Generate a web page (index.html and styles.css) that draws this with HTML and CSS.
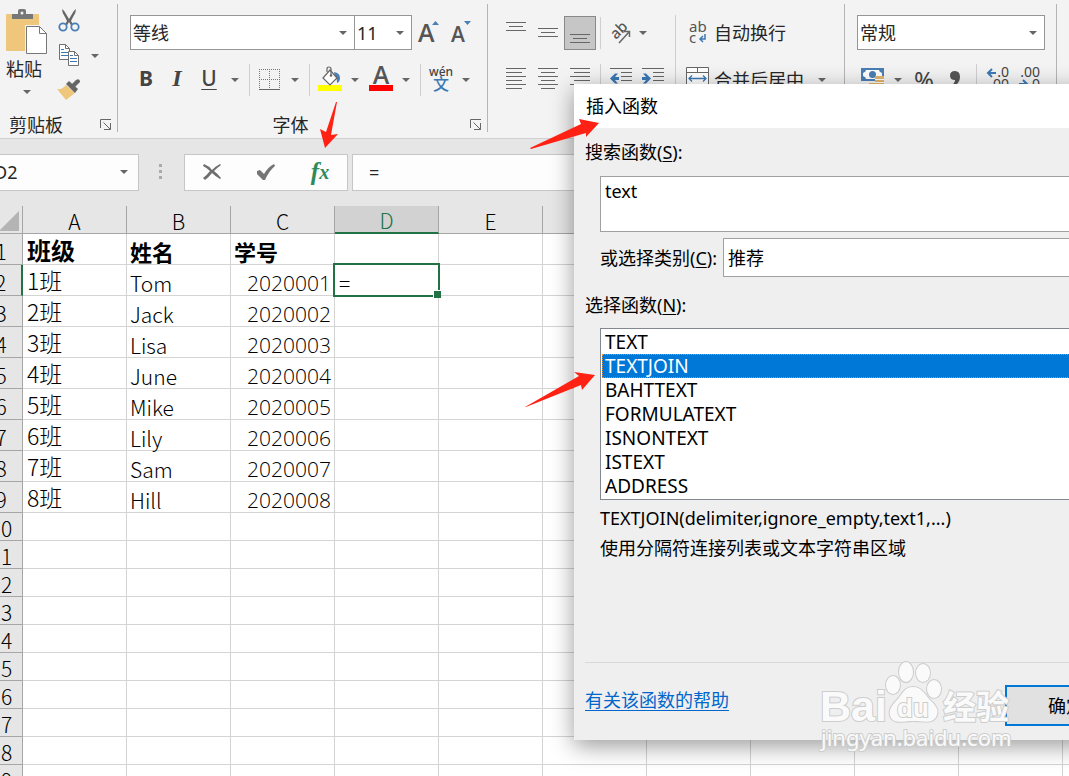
FILE: index.html
```html
<!DOCTYPE html>
<html lang="zh-CN">
<head>
<meta charset="utf-8">
<title>插入函数</title>
<link rel="stylesheet" href="styles.css">
</head>
<body>
<header class="ribbon">
  <section class="group clipboard">
    <div class="clip-body">
      <button class="tool paste" type="button">
        <svg width="42" height="46" viewBox="0 0 42 46"><path fill="#eec77c" d="M0 6q0-1 1-1h31q1 0 1 1v36H1q-1 0-1-1z"/><path fill="#777" d="M6 10V5h6V2q0-2 2-2h4q2 0 2 2v3h7v5z"/><circle cx="16" cy="4" r="1.500" fill="#f3f3f3"/><path fill="#fff" stroke="#f3f3f3" stroke-width="4" d="M21 18h13l7 7v20H21z"/><path fill="#fff" stroke="#777" d="M20.500 17.500h13l7 7v20h-20z"/><path fill="none" stroke="#777" d="M33.500 17.500v7h7"/></svg>
        <span>粘贴</span><i class="caret"></i>
      </button>
      <div class="clip-tools">
        <button class="tool" type="button" aria-label="剪切"><svg width="22" height="24" viewBox="0 0 22 24"><path fill="#666" d="M4 0q2 1 4 5l3 5 3-5q2-4 4-5 0 4-3 8l-2 4 3 5-2 1-3-5-3 5-2-1 3-5-2-4Q4 4 4 0z"/><g fill="#f3f3f3" stroke="#4a7fb5" stroke-width="1.800"><circle cx="5" cy="18" r="3.700"/><circle cx="17" cy="18" r="3.700"/></g></svg></button><i></i>
        <button class="tool" type="button" aria-label="复制"><svg width="22" height="24" viewBox="0 0 22 24"><g fill="#fff" stroke="#707070"><path d="M1.500.5h6l4 4v11h-10z"/><path d="M7.500.5v4h4" fill="none"/></g><path stroke="#3c78b4" d="M3 5.500h3M3 8.500h7M3 11.500h7"/><g fill="#fff" stroke="#707070"><path d="M10.500 7.500h6l4 4v10h-10z"/><path d="M16.500 7.500v4h4" fill="none"/></g><path stroke="#3c78b4" d="M12 11.500h3M12 14.500h7M12 17.500h7"/></svg></button><button class="tool" type="button" aria-label="复制选项"><i class="caret"></i></button>
        <button class="tool" type="button" aria-label="格式刷"><svg width="24" height="22" viewBox="0 0 24 22"><path fill="#eec77c" d="M0 10q5 1 9-4l9 8-9 7z"/><path fill="#666" d="m9 5 3-3 9 8-3 4zM15 5l4-4q3-2 4 1 0 2-1 2l-4 4z"/></svg></button>
      </div>
    </div>
    <footer><span>剪贴板</span><button class="tool launcher" type="button" aria-label="剪贴板设置"><svg width="12" height="12" viewBox="0 0 12 12"><path fill="none" stroke="#666" d="M.5 9V.5H11M3.500 3.500l7 7M10.500 4v6.500H4"/></svg></button></footer>
  </section>

  <section class="group font">
    <div class="row">
      <label class="drop name"><select aria-label="字体"><option>等线</option></select></label><label class="drop size"><select aria-label="字号"><option>11</option></select></label>
      <button class="tool grow" type="button" aria-label="增大字号"><svg width="22" height="24" viewBox="0 0 22 24"><path fill="#4a7fb5" d="M15 4l3.500-4L22 4z"/><text x="1" y="21" class="letter big">A</text></svg></button>
      <button class="tool grow" type="button" aria-label="减小字号"><svg width="22" height="24" viewBox="0 0 22 24"><path fill="#4a7fb5" d="M15 0h7l-3.500 4z"/><text x="2" y="21" class="letter small">A</text></svg></button>
    </div>
    <div class="row font-tools">
      <button class="tool" type="button"><b>B</b></button>
      <button class="tool" type="button"><em>I</em></button>
      <button class="tool" type="button"><u>U</u></button>
      <button class="tool" type="button" aria-label="下划线选项"><i class="caret"></i></button>
      <i class="sep"></i>
      <button class="tool" type="button" aria-label="边框"><svg width="22" height="22" viewBox="0 0 22 22"><path fill="none" stroke="#777" stroke-dasharray="1 1" d="M.5 0v21M20.500 0v21M10.500 0v21M0 .5h21M0 10.500h21"/><path stroke="#666" stroke-width="1" d="M0 20.500h21"/></svg></button>
      <button class="tool" type="button" aria-label="边框选项"><i class="caret"></i></button>
      <i class="sep"></i>
      <button class="tool" type="button" aria-label="填充颜色"><svg width="24" height="28" viewBox="0 0 24 28"><path fill="#ff0" d="M0 19h24v6H0z"/><path fill="#4a7fb5" d="M16 6q6 1 6 6 0 4-3 5 0-5-2-7z"/><path fill="#fff" stroke="#666" stroke-width="1.200" d="m12 4 7 8-7 7-7-7z"/><path fill="none" stroke="#666" stroke-width="1.200" d="M9 6V3q0-2 2-2t2 2v7"/><circle cx="13" cy="9.500" r="1.300" fill="#666"/></svg></button>
      <button class="tool" type="button" aria-label="填充选项"><i class="caret"></i></button>
      <button class="tool" type="button" aria-label="字体颜色"><svg width="24" height="28" viewBox="0 0 24 28"><path fill="red" d="M0 19h24v6H0z"/><text x="12" y="18" text-anchor="middle" class="letter big">A</text></svg></button>
      <button class="tool" type="button" aria-label="颜色选项"><i class="caret"></i></button>
      <i class="sep"></i>
      <button class="tool" type="button" aria-label="拼音"><svg width="24" height="28" viewBox="0 0 24 28"><text x="12" y="10" text-anchor="middle" class="pinyin">wén</text><text x="12" y="24" text-anchor="middle" class="wen">文</text></svg></button>
      <button class="tool" type="button" aria-label="拼音选项"><i class="caret"></i></button>
    </div>
    <footer><span>字体</span><button class="tool launcher" type="button" aria-label="字体设置"><svg width="12" height="12" viewBox="0 0 12 12"><path fill="none" stroke="#666" d="M.5 9V.5H11M3.500 3.500l7 7M10.500 4v6.500H4"/></svg></button></footer>
  </section>

  <section class="group align">
    <div class="align-left">
      <div class="row align-tools">
        <button class="tool" type="button" aria-label="顶端对齐"><svg width="20" height="22" viewBox="0 0 20 22"><path stroke="#666" d="M0 .5h20M3 4.500h14M0 8.500h20"/></svg></button>
        <button class="tool" type="button" aria-label="垂直居中"><svg width="20" height="22" viewBox="0 0 20 22"><path stroke="#666" d="M0 6.500h20M3 10.500h14M0 14.500h20"/></svg></button>
        <button class="tool pressed" type="button" aria-label="底端对齐"><svg width="20" height="22" viewBox="0 0 20 22"><path stroke="#666" d="M0 12.500h20M3 16.500h14M0 20.500h20"/></svg></button>
        <i class="sep"></i>
        <button class="tool" type="button" aria-label="方向"><svg width="24" height="24" viewBox="0 0 24 24"><text x="0" y="0" class="ab" transform="translate(7 19) rotate(-45)">ab</text><path fill="none" stroke="#666" stroke-width="1.500" d="M10 22 20 11M15 10.500h5.500V16"/></svg></button>
        <button class="tool start" type="button" aria-label="方向选项"><i class="caret"></i></button>
      </div>
      <div class="row align-tools">
        <button class="tool" type="button" aria-label="左对齐"><svg width="20" height="24" viewBox="0 0 20 24"><path stroke="#666" d="M0 .5h20M0 4.500h16M0 8.500h20M0 12.500h16M0 16.500h20M0 20.500h16"/></svg></button>
        <button class="tool" type="button" aria-label="居中"><svg width="20" height="24" viewBox="0 0 20 24"><path stroke="#666" d="M0 .5h20M3 4.500h14M0 8.500h20M3 12.500h14M0 16.500h20M3 20.500h14"/></svg></button>
        <button class="tool" type="button" aria-label="右对齐"><svg width="20" height="24" viewBox="0 0 20 24"><path stroke="#666" d="M0 .5h20M4 4.500h16M0 8.500h20M4 12.500h16M0 16.500h20M4 20.500h16"/></svg></button>
        <i class="sep"></i>
        <button class="tool" type="button" aria-label="减少缩进"><svg width="22" height="24" viewBox="0 0 22 24"><path stroke="#666" d="M0 .5h22M11 4.500h11M11 8.500h11M11 12.500h11M0 16.500h22"/><path fill="#3c78b4" d="m0 10.500 5-5h3L5 9h4v3H5l3 3.500H5z"/></svg></button>
        <button class="tool" type="button" aria-label="增加缩进"><svg width="22" height="24" viewBox="0 0 22 24"><path stroke="#666" d="M0 .5h22M11 4.500h11M11 8.500h11M11 12.500h11M0 16.500h22"/><path fill="#3c78b4" d="m9 10.500-5-5H1L4 9H0v3h4l-3 3.500h3z"/></svg></button>
      </div>
    </div>
    <i class="sep tall"></i>
    <div class="align-right">
      <button class="tool row wide" type="button"><svg width="24" height="26" viewBox="0 0 24 26"><text x="3" y="12" class="abc">ab</text><text x="3" y="23" class="abc">c</text><path fill="none" stroke="#3c78b4" stroke-width="1.500" d="M19 14v5h-5M17 16l-3 3 3 3"/></svg><span>自动换行</span></button>
      <button class="tool row wide" type="button"><svg width="24" height="26" viewBox="0 0 24 26"><path fill="#fff" stroke="#666" d="M.5.5h22v21H.5zM.5 5.500h22M.5 17.500h22M11.500.5v5M11.500 17.500v4"/><path fill="none" stroke="#3c78b4" stroke-width="1.300" d="M3 11.500h17M6 8.500l-3 3 3 3M17 8.500l3 3-3 3"/></svg><span>合并后居中</span><i class="caret"></i></button>
    </div>
  </section>

  <section class="group number">
    <div class="row"><label class="drop format"><select aria-label="数字格式"><option>常规</option></select></label></div>
    <div class="row number-tools">
      <button class="tool" type="button" aria-label="会计数字格式"><svg width="24" height="24" viewBox="0 0 24 24"><path fill="#4a7fb5" d="M0 0h23v13H0z"/><path fill="#fff" d="M5 2h13q0 2 3 3v3q-3 1-3 3H5q0-2-3-3V5q3-1 3-3z"/><circle cx="11.500" cy="6.500" r="3.500" fill="#4a7fb5"/><path fill="#e4b56c" d="M14 8h9v14H8v-7h6z"/><path stroke="#fff" d="M14 11.500h9M14 14.500h9M8 17.500h15"/></svg></button>
      <button class="tool" type="button" aria-label="会计格式选项"><i class="caret"></i></button>
      <button class="tool percent" type="button">%</button>
      <button class="tool" type="button" aria-label="千位分隔"><svg width="12" height="22" viewBox="0 0 12 22"><path fill="#555" d="M5 2q5 0 5 6 0 7-8 10l-1-1q4-3 4-6-5 0-5-4.500T5 2z"/></svg></button>
      <i class="sep"></i>
      <button class="tool" type="button" aria-label="增加小数位"><svg width="26" height="28" viewBox="0 0 26 28"><text x="24" y="11" text-anchor="end" class="dec">.0</text><text x="24" y="23" text-anchor="end" class="dec">.00</text><path fill="none" stroke="#3c78b4" stroke-width="2" d="M3 7h8M7 3 3 7l4 4"/></svg></button>
      <button class="tool" type="button" aria-label="减少小数位"><svg width="26" height="28" viewBox="0 0 26 28"><text x="23" y="11" text-anchor="end" class="dec">.00</text><text x="23" y="23" text-anchor="end" class="dec">.0</text><path fill="none" stroke="#3c78b4" stroke-width="2" d="M2 18h8M6 14l4 4-4 4"/></svg></button>
    </div>
  </section>
</header>

<div class="formula-bar">
  <label class="drop name-box"><select aria-label="名称框"><option>D2</option></select></label>
  <svg class="grip" width="4" height="16" viewBox="0 0 4 16"><path fill="#aaa" d="M0 0h3v3H0zM0 6h3v3H0zM0 12h3v3H0z"/></svg>
  <div class="formula-actions">
    <button class="tool" type="button" aria-label="取消"><svg width="20" height="18" viewBox="0 0 20 18"><path fill="#6e6e6e" d="M2 1q5 2 8 6 4-4 8-6l1 1q-4 3-7 6 4 3 7 7l-1 1q-5-3-8-6-3 4-7 7l-2-2q4-3 7-7Q5 5 1 3z"/></svg></button>
    <button class="tool" type="button" aria-label="输入"><svg width="20" height="18" viewBox="0 0 20 18"><path fill="#757575" d="m1 8 3-1 4 4q4-7 10-10l1 2Q13 8 9 17H7L1 11z"/></svg></button>
    <button class="tool fx" type="button">f<small>x</small></button>
  </div>
  <input class="formula" aria-label="编辑栏" value="=">
</div>

<main class="sheet">
<table>
  <colgroup><col class="rows"><col span="11"></colgroup>
  <thead><tr><th><svg class="corner" width="20" height="20" viewBox="0 0 20 20"><path fill="#b4b4b4" d="M20 0v20H0z"/></svg></th><th>A</th><th>B</th><th>C</th><th class="active">D</th><th>E</th><th></th><th></th><th></th><th></th><th></th><th></th></tr></thead>
  <tbody>
  <tr class="data head"><th>1</th><td class="first">班级</td><td>姓名</td><td>学号</td><td></td><td></td><td></td><td></td><td></td><td></td><td></td><td></td></tr>
  <tr class="data"><th class="active">2</th><td class="first">1班</td><td>Tom</td><td class="num">2020001</td><td class="selected">=</td><td></td><td></td><td></td><td></td><td></td><td></td><td></td></tr>
  <tr class="data"><th>3</th><td class="first">2班</td><td>Jack</td><td class="num">2020002</td><td></td><td></td><td></td><td></td><td></td><td></td><td></td><td></td></tr>
  <tr class="data"><th>4</th><td class="first">3班</td><td>Lisa</td><td class="num">2020003</td><td></td><td></td><td></td><td></td><td></td><td></td><td></td><td></td></tr>
  <tr class="data"><th>5</th><td class="first">4班</td><td>June</td><td class="num">2020004</td><td></td><td></td><td></td><td></td><td></td><td></td><td></td><td></td></tr>
  <tr class="data"><th>6</th><td class="first">5班</td><td>Mike</td><td class="num">2020005</td><td></td><td></td><td></td><td></td><td></td><td></td><td></td><td></td></tr>
  <tr class="data"><th>7</th><td class="first">6班</td><td>Lily</td><td class="num">2020006</td><td></td><td></td><td></td><td></td><td></td><td></td><td></td><td></td></tr>
  <tr class="data"><th>8</th><td class="first">7班</td><td>Sam</td><td class="num">2020007</td><td></td><td></td><td></td><td></td><td></td><td></td><td></td><td></td></tr>
  <tr class="data"><th>9</th><td class="first">8班</td><td>Hill</td><td class="num">2020008</td><td></td><td></td><td></td><td></td><td></td><td></td><td></td><td></td></tr>
  <tr><th>10</th><td></td><td></td><td></td><td></td><td></td><td></td><td></td><td></td><td></td><td></td><td></td></tr>
  <tr><th>11</th><td></td><td></td><td></td><td></td><td></td><td></td><td></td><td></td><td></td><td></td><td></td></tr>
  <tr><th>12</th><td></td><td></td><td></td><td></td><td></td><td></td><td></td><td></td><td></td><td></td><td></td></tr>
  <tr><th>13</th><td></td><td></td><td></td><td></td><td></td><td></td><td></td><td></td><td></td><td></td><td></td></tr>
  <tr><th>14</th><td></td><td></td><td></td><td></td><td></td><td></td><td></td><td></td><td></td><td></td><td></td></tr>
  <tr><th>15</th><td></td><td></td><td></td><td></td><td></td><td></td><td></td><td></td><td></td><td></td><td></td></tr>
  <tr><th>16</th><td></td><td></td><td></td><td></td><td></td><td></td><td></td><td></td><td></td><td></td><td></td></tr>
  <tr><th>17</th><td></td><td></td><td></td><td></td><td></td><td></td><td></td><td></td><td></td><td></td><td></td></tr>
  <tr><th>18</th><td></td><td></td><td></td><td></td><td></td><td></td><td></td><td></td><td></td><td></td><td></td></tr>
  <tr><th>19</th><td></td><td></td><td></td><td></td><td></td><td></td><td></td><td></td><td></td><td></td><td></td></tr>
  </tbody>
</table>
</main>

<div class="dialog" role="dialog" aria-labelledby="dialog-title">
  <h1 id="dialog-title">插入函数</h1>
  <div class="dialog-body">
    <label for="search">搜索函数(<u>S</u>):</label>
    <textarea id="search" class="indent">text</textarea>
    <div class="category indent"><label for="category">或选择类别(<u>C</u>):</label><select id="category"><option>推荐</option></select></div>
    <label id="list-label">选择函数(<u>N</u>):</label>
    <ul class="functions indent" role="listbox" aria-labelledby="list-label" tabindex="0">
      <li role="option">TEXT</li>
      <li role="option" aria-selected="true">TEXTJOIN</li>
      <li role="option">BAHTTEXT</li>
      <li role="option">FORMULATEXT</li>
      <li role="option">ISNONTEXT</li>
      <li role="option">ISTEXT</li>
      <li role="option">ADDRESS</li>
    </ul>
    <p class="indent">TEXTJOIN(delimiter,ignore_empty,text1,...)</p>
    <p class="indent">使用分隔符连接列表或文本字符串区域</p>
  </div>
  <div class="dialog-footer"><a href="#help">有关该函数的帮助</a><button class="ok" type="button">确定</button></div>
</div>

<svg class="watermark" width="196" height="96" viewBox="0 0 196 96">
  <g class="mark">
    <text x="1" y="61" class="bai">Bai</text>
    <ellipse cx="74" cy="25" rx="7" ry="9"/><ellipse cx="87" cy="12" rx="7" ry="10"/><ellipse cx="104" cy="13" rx="7" ry="9"/><ellipse cx="115" cy="29" rx="7" ry="9"/>
    <path d="M94 27c9 0 12 8 17 13 8 7 9 12 6 17-4 7-12 4-23 4s-18 3-22-3c-3-6-1-11 6-18 5-5 7-13 16-13z"/>
    <text x="94" y="57" text-anchor="middle" class="du">du</text>
    <text x="124" y="59" class="jingyan">经验</text>
    <text x="2" y="86" class="url">jingyan.baidu.com</text>
  </g>
</svg>

<svg class="arrows" width="76" height="312" viewBox="524 98 76 312"><path fill="#ff2214" d="m530 148 51-24-2-5 20 4-13 14v-4l-55 16zM525 407l54-31-5-4 21 3-13 15-1-5-55 22z"/></svg>
<svg class="arrow-down" width="18" height="47" viewBox="320 101 18 47"><path fill="#ff2214" d="M336 102h1l-6 33 7-1-13 14-5-19 6 3z"/></svg>
</body>
</html>
```

FILE: styles.css
```css
* { box-sizing: border-box; }

body {
  margin: 0;
  height: 100vh;
  overflow: hidden;
  position: relative;
  display: flex;
  flex-direction: column;
  background: #fff;
  color: #000;
  font: 18px/24px "Noto Sans", "Noto Sans CJK SC", sans-serif;
}

button, select, input, textarea { font: inherit; color: inherit; }
svg { display: block; flex: none; overflow: visible; }

.tool {
  display: flex;
  align-items: center;
  justify-content: center;
  padding: 0;
  border: 0;
  background: none;
  color: #444;
}
.caret {
  display: block;
  border: 4px solid transparent;
  border-top-color: #666;
  border-bottom: 0;
}
.sep { width: 1px; height: 32px; background: #cfcfcf; }

/* Ribbon */
.ribbon {
  flex: none;
  display: flex;
  height: 139px;
  background: #f3f3f3;
  border-bottom: 1px solid #d0d0d0;
  color: #262626;
}
.group {
  position: relative;
  display: flex;
  flex-direction: column;
  gap: 12px;
  margin: 4px 0 6px;
  padding: 11px 0 0 12px;
  border-right: 1px solid #b5b5b5;
}
.group footer {
  margin-top: auto;
  display: flex;
  align-items: center;
  height: 14px;
}
.row { display: flex; align-items: center; height: 35px; }

.drop {
  position: relative;
  display: flex;
  height: 35px;
  background: #fff;
  border: 1px solid #969696;
}
.drop select {
  appearance: none;
  width: 100%;
  border: 0;
  padding: 0 2px;
  background: none;
  color: #262626;
}
.drop::after {
  content: "";
  position: absolute;
  right: 7px;
  top: 15px;
  border: 4px solid transparent;
  border-top-color: #666;
  border-bottom: 0;
}

.clipboard { width: 118px; gap: 0; padding: 5px 5px 0 6px; }
.clip-body { display: flex; gap: 9px; }
.paste { flex-direction: column; justify-content: flex-start; width: 42px; color: #262626; }
.paste span { align-self: flex-start; line-height: 28px; }
.paste .caret { margin-top: 7px; }
.clip-tools {
  display: grid;
  grid-template-columns: 24px 28px;
  grid-template-rows: 35px 35px 24px;
  align-items: start;
}
.clip-tools .tool:has(.caret) { height: 24px; }
.clipboard footer { justify-content: space-between; padding-left: 3px; }

.font { width: 370px; }
.font .name { width: 225px; }
.font .size { width: 58px; margin-left: -1px; }
.grow { width: 32px; }
.letter { font-family: "Open Sans", sans-serif; font-weight: 600; fill: #555; }
.big { font-size: 25px; }
.small { font-size: 21px; }
.font-tools {
  display: grid;
  grid-template-columns: 32px 30px 34px 18px 10px 31px 20px 9px 32px 18px 34px 16px 13px 28px 22px;
  justify-items: center;
}
.font-tools b, .font-tools em, .font-tools u { line-height: 26px; padding-bottom: 4px; }
.font-tools b { font-size: 21px; }
.font-tools em { font-family: "Liberation Serif", serif; font-size: 24px; font-weight: 700; }
.font-tools u { font-size: 21px; font-weight: 500; text-underline-offset: 3px; text-decoration-thickness: 1px; }
.pinyin { font-size: 12px; font-weight: 500; fill: #444; }
.wen { font-size: 16px; font-weight: 500; fill: #3c78b4; }
.font footer { justify-content: center; padding-right: 36px; }
.font footer .launcher { position: absolute; right: 5px; }

.align {
  width: 357px;
  flex-direction: row;
  gap: 6px;
}
.align-left, .align-right { display: flex; flex-direction: column; gap: 12px; }
.align-tools {
  display: grid;
  grid-template-columns: 32px 32px 32px 9px 32px 32px;
  justify-items: center;
}
.align-tools .start { justify-self: start; width: 12px; }
.pressed { width: 32px; height: 34px; background: #c6c6c6; border: 1px solid #8a8a8a; }
.sep.tall { height: 82px; }
.align-right { margin-left: 4px; }
.wide { justify-content: flex-start; gap: 4px; color: #262626; }
.wide .caret { margin-left: 10px; }
.ab { font-size: 15px; font-weight: 500; fill: #555; }
.abc { font-size: 15px; fill: #555; }

.number { width: 212px; }
.format { width: 188px; }
.number-tools {
  display: grid;
  grid-template-columns: 32px 18px 34px 30px 11px 32px 32px;
  justify-items: center;
}
.percent { font-size: 24px; }
.dec { font-size: 14px; fill: #444; }

/* Formula bar */
.formula-bar {
  flex: none;
  display: flex;
  align-items: center;
  height: 67px;
  padding-bottom: 1px;
  background: #e6e6e6;
}
.formula-bar .drop, .formula-actions, .formula {
  height: 37px;
  background: #fdfdfd;
  border: 1px solid #c6c6c6;
}
.name-box { width: 159px; margin-left: -20px; }
.name-box::after { right: 10px; }
.name-box select { padding-left: 13px; }
.grip { margin: 0 21px 0 20px; }
.formula-actions {
  display: grid;
  grid-template-columns: repeat(3, 1fr);
  width: 164px;
  margin-right: 4px;
}
.fx { color: #2f8a58; font: italic bold 25px/26px "Liberation Serif", serif; }
.fx small { font-size: 20px; }
.formula { flex: 1; min-width: 0; padding: 0 16px; color: #262626; }

/* Worksheet */
.sheet { flex: 1; min-height: 0; overflow: hidden; }
table {
  width: 1187px;
  margin-left: -20px;
  table-layout: fixed;
  border-collapse: separate;
  border-spacing: 0;
  font: 300 21px/24px "Noto Sans CJK SC", sans-serif;
}
col { width: 104px; }
.rows { width: 43px; }
th, td {
  height: 28px;
  padding: 2px 3px 0;
  border-right: 1px solid #d4d4d4;
  border-bottom: 1px solid #d4d4d4;
  white-space: nowrap;
  text-align: left;
}
th {
  padding: 2px 0 0;
  background: #e6e6e6;
  border-color: #a6a6a6;
  font-weight: 300;
  text-align: center;
}
tr.data th { height: 31px; padding-top: 4px; }
tr.data td { height: 31px; padding-top: 5px; }
thead .active { background: #d2d2d2; color: #217346; border-bottom: 2px solid #217346; }
tbody .active { border-right: 2px solid #217346; }
.corner { margin-left: 19px; }
tr.data .first { font-size: 23px; padding-left: 4px; padding-top: 0; }
tr.data .num { font-family: "Open Sans", sans-serif; padding-top: 6px; text-align: right; }
.head td { font-weight: 700; }
tr.data.head td { font-size: 22px; padding-top: 3px; }
tr.data.head .first { font-size: 24px; padding-top: 2px; }
tr.data .selected { position: relative; padding-left: 4px; }
.selected::before {
  content: "";
  position: absolute;
  inset: -2px;
  border: 2px solid #217346;
}
.selected::after {
  content: "";
  position: absolute;
  right: -3px;
  bottom: -3px;
  width: 7px;
  height: 7px;
  background: #217346;
  border: solid #fff;
  border-width: 1px 0 0 1px;
}

/* Insert function dialog */
.dialog {
  position: absolute;
  top: 84px;
  left: 574px;
  right: -70px;
  background: #efefef;
  box-shadow: 0 6px 22px rgba(0, 0, 0, .4);
}
.dialog h1 {
  margin: 0;
  padding: 10px 12px;
  background: #fff;
  font-size: 18px;
  font-weight: 400;
}
.dialog-body {
  display: flex;
  flex-direction: column;
  height: 535px;
  margin: 0 11px;
  padding-top: 12px;
  border-bottom: 1px solid #d9d9d9;
}
.dialog-body u { text-underline-offset: 2px; text-decoration-thickness: 1px; }
.indent { margin-left: 15px; }
.dialog textarea {
  height: 56px;
  margin-top: 12px;
  padding: 2px 4px;
  border: 1px solid #a0a0a0;
  background: #fff;
  resize: none;
}
.category {
  display: flex;
  align-items: center;
  gap: 6px;
  margin-top: 6px;
  margin-bottom: 16px;
}
.category select {
  appearance: none;
  flex: 1;
  height: 39px;
  padding: 0 4px;
  border: 1px solid #a0a0a0;
  border-radius: 0;
  background: #fff;
}
.functions {
  list-style: none;
  margin-top: 11px;
  margin-bottom: 6px;
  padding: 1px;
  border: 1px solid #828790;
  background: #fff;
  font-size: 19px;
}
.functions li { height: 24px; padding-left: 3px; }
.functions [aria-selected="true"] {
  padding-left: 2px;
  border: 1px dotted #e88a30;
  line-height: 22px;
  background: #0078d7;
  color: #fff;
}
p { margin-top: 0; margin-bottom: 6px; }
.dialog-footer {
  display: flex;
  align-items: flex-start;
  justify-content: space-between;
  height: 77px;
  padding: 22px 12px 0 11px;
}
.dialog-footer a {
  line-height: 30px;
  color: #0066cc;
  text-underline-offset: 3px;
  text-decoration-thickness: 1px;
}
.ok {
  width: 122px;
  height: 41px;
  border: 2px solid #0078d7;
  background: #e1e1e1;
}

/* Overlays */
.watermark { position: absolute; left: 819px; top: 660px; pointer-events: none; }
.mark { fill: #fafafa; stroke: #cdcdcd; stroke-width: 2px; paint-order: stroke; }
.bai { font: bold 43px "Liberation Sans", sans-serif; }
.du { font: bold 26px "Liberation Sans", sans-serif; }
.jingyan { font: bold 33px "Noto Sans CJK SC", sans-serif; }
.url { font: 22px "Noto Sans", sans-serif; }
.arrows { position: absolute; left: 524px; top: 98px; pointer-events: none; }
.arrow-down { position: absolute; left: 320px; top: 101px; pointer-events: none; }
```
